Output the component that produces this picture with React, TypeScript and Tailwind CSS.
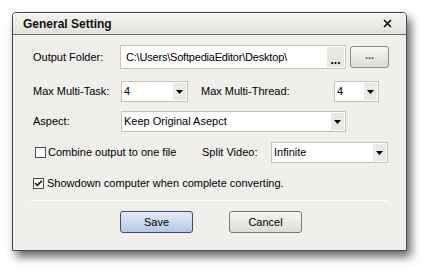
import { Check } from 'lucide-react';

const font = { fontFamily: '"Liberation Sans", Arial, sans-serif' };

const Arrow = () => (
  <div className="w-[13px] self-stretch my-px mr-px bg-[#ebe9e5] flex items-center justify-center">
    <svg width="7" height="4" viewBox="0 0 7 4">
      <polygon points="0,0 7,0 3.5,4" fill="#000" />
    </svg>
  </div>
);

const Select = ({ value, className }: { value: string; className: string }) => (
  <div className={`h-[21px] bg-white border border-[#c7c4bb] flex items-center ${className}`}>
    <span className="flex-1 pl-[2px] text-[11px] text-black truncate">{value}</span>
    <Arrow />
  </div>
);

const Box = ({ checked }: { checked?: boolean }) => (
  <div className="w-[11px] h-[11px] bg-white border border-[#4b4b4b] flex items-center justify-center">
    {checked && <Check className="w-[9px] h-[9px] text-black" strokeWidth={4} />}
  </div>
);

export default function App() {
  return (
    <div className="w-[428px] h-[271px] bg-white pt-[12px] pl-[12px]" style={font}>
      <div className="w-[395px] h-[239px] border border-[#4a4a4a] rounded-t-[4px] bg-[#f1efec] shadow-[4px_6px_10px_rgba(0,0,0,0.6)] flex flex-col">
        {/* title bar */}
        <div className="h-[22px] shrink-0 rounded-t-[3px] bg-gradient-to-b from-[#f5f4f1] to-[#e4e2de] border-b border-[#6f6f6f] flex items-center justify-between pl-[10px] pr-[14px]">
          <span className="text-[12px] font-bold text-[#111]">General Setting</span>
          <svg width="9" height="9" viewBox="0 0 9 9">
            <path d="M1 1 L8 8 M8 1 L1 8" stroke="#000" strokeWidth="1.5" />
          </svg>
        </div>

        <div className="flex flex-col pl-[20px] text-[11px] text-black">
          {/* output folder */}
          <div className="flex items-center mt-[10px] h-[24px]">
            <span className="w-[87px]">Output Folder:</span>
            <div className="w-[226px] h-[24px] bg-white border border-[#c7c4bb] flex items-center">
              <span className="flex-1 pl-[5px] tracking-[-0.2px]">C:\Users\SoftpediaEditor\Desktop\</span>
              <div className="w-[17px] h-[20px] mr-px bg-[#e9e7e3] flex items-end justify-center pb-[1px] text-[12px] font-bold leading-none">...</div>
            </div>
            <div className="ml-[4px] w-[39px] h-[22px] rounded-[3px] border border-[#8a8a8a] bg-gradient-to-b from-[#f7f6f4] to-[#dedbd6] flex items-center justify-center text-[11px] text-[#4a3f8c] font-bold leading-none pb-[3px]">...</div>
          </div>

          {/* multi task / thread */}
          <div className="flex items-center mt-[12px]">
            <span className="w-[88px]">Max Multi-Task:</span>
            <Select value="4" className="w-[67px]" />
            <span className="ml-[13px] w-[133px]">Max Multi-Thread:</span>
            <Select value="4" className="w-[45px]" />
          </div>

          {/* aspect */}
          <div className="flex items-center mt-[9px]">
            <span className="w-[88px]">Aspect:</span>
            <Select value="Keep Original Asepct" className="w-[225px]" />
          </div>

          {/* combine / split */}
          <div className="flex items-center mt-[10px]">
            <div className="ml-[2px]"><Box /></div>
            <span className="ml-[2px] w-[154px]">Combine output to one file</span>
            <span className="w-[69px]">Split Video:</span>
            <Select value="Infinite" className="w-[117px]" />
          </div>

          {/* shutdown */}
          <div className="flex items-center mt-[10px] h-[21px]">
            <Box checked />
            <span className="ml-[3px]">Showdown computer when complete converting.</span>
          </div>

          <div className="ml-[-3px] mt-[6px] w-[357px] h-px bg-[#a9a7a3] border-b border-white" />

          <div className="flex mt-[10px] ml-[87px] gap-[36px]">
            <button className="w-[73px] h-[22px] rounded-[3px] border border-[#3f4f6e] bg-gradient-to-b from-[#e3ebf7] to-[#b4c8e6] text-[11px] text-black">Save</button>
            <button className="w-[73px] h-[22px] rounded-[3px] border border-[#7a7a7a] bg-gradient-to-b from-[#f7f6f3] to-[#dedbd5] text-[11px] text-black">Cancel</button>
          </div>
        </div>
      </div>
    </div>
  );
}
